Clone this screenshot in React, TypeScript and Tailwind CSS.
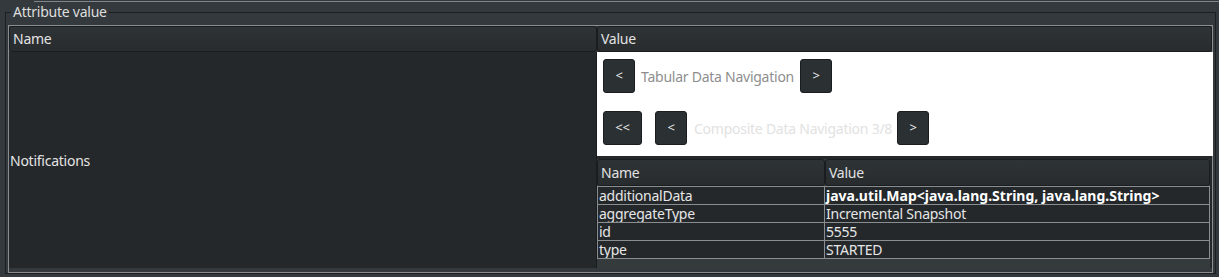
import React from "react";

const rows = [
  { name: "additionalData", value: "java.util.Map<java.lang.String, java.lang.String>", bold: true },
  { name: "aggregateType", value: "Incremental Snapshot" },
  { name: "id", value: "5555" },
  { name: "type", value: "STARTED" },
];

const NavButton = ({ label, wide }: { label: string; wide?: boolean }) => (
  <button
    className={`${wide ? "w-[39px]" : "w-[32px]"} h-[34px] shrink-0 rounded-[3px] border border-[#1a1d1f] bg-[#2b3033] text-[13px] text-[#eeeeee] flex items-center justify-center`}
  >
    {label}
  </button>
);

const HeaderCell = ({ label, className }: { label: string; className?: string }) => (
  <div
    className={`h-full flex items-center px-[3px] pb-px rounded-[3px] border border-[#1a1d1f] bg-gradient-to-b from-[#2e3336] to-[#282c2f] text-[#e2e2e2] ${className ?? ""}`}
  >
    {label}
  </div>
);

export default function App() {
  return (
    <div
      className="w-[1219px] h-[277px] bg-[#33393c] overflow-hidden pt-px tracking-[-0.25px]"
      style={{ fontFamily: '"Noto Sans", "Open Sans", sans-serif' }}
    >
      <div className="h-[276px] border-t border-r border-[#80858a] ml-[34px] -mr-px">
        {/* frame of the parent pane */}
      </div>
      <div className="-mt-[276px] pl-px pr-[2px]">
        <fieldset className="ml-[4px] mr-[1px] mt-[3px] h-[270px] border border-[#1c1f21] px-[2px] text-[14px]">
          <legend className="ml-[3px] px-[2px] leading-[16px] text-[#dedede] bg-[#33393c]">Attribute value</legend>

          {/* Attribute table */}
          <div className="mt-[5px] border border-[#8a8e91] bg-[#33393c] h-[248px] flex flex-col">
            <div className="h-[26px] flex shrink-0">
              <HeaderCell label="Name" className="w-[588px]" />
              <HeaderCell label="Value" className="flex-1" />
            </div>

            <div className="flex h-[216px]">
              <div className="w-[588px] bg-[#24282b] flex items-center pl-px text-[#e4e4e4] border-r border-[#1a1d1f]">
                Notifications
              </div>
              <div className="flex-1 flex flex-col bg-[#24282b]">
                {/* navigation panel */}
                <div className="h-[104px] bg-white pl-[6px] pt-[7px] flex flex-col gap-[18px] mr-[-1px]">
                  <div className="flex items-center gap-[6px]">
                    <NavButton label="<" />
                    <span className="text-[#8e8e8e] pt-px">Tabular Data Navigation</span>
                    <NavButton label=">" />
                  </div>
                  <div className="flex items-center">
                    <NavButton label="<<" wide />
                    <div className="ml-[13px]">
                      <NavButton label="<" />
                    </div>
                    <span className="ml-[7px] text-[#e2e2e2] pt-px">Composite Data Navigation 3/8</span>
                    <div className="ml-[5px]">
                      <NavButton label=">" />
                    </div>
                  </div>
                </div>

                {/* nested table */}
                <div className="mt-[3px] mr-[2px] flex-1 bg-[#353a3d] flex flex-col">
                  <div className="h-[27px] flex shrink-0">
                    <HeaderCell label="Name" className="w-[228px]" />
                    <HeaderCell label="Value" className="flex-1" />
                  </div>
                  <div className="border-t border-[#8a8e91]">
                    {rows.map((r) => (
                      <div key={r.name} className="h-[18px] flex border-b border-[#8a8e91] bg-[#24282b] leading-[17px]">
                        <div className="w-[228px] border-l border-r border-[#8a8e91] pl-[1px] text-[#e6e6e6] overflow-hidden whitespace-nowrap">
                          {r.name}
                        </div>
                        <div
                          className={`flex-1 border-r border-[#8a8e91] pl-[1px] overflow-hidden whitespace-nowrap ${
                            r.bold ? "font-bold text-white tracking-normal" : "text-[#e6e6e6]"
                          }`}
                        >
                          {r.value}
                        </div>
                      </div>
                    ))}
                  </div>
                </div>
              </div>
            </div>
          </div>
        </fieldset>
      </div>
    </div>
  );
}
